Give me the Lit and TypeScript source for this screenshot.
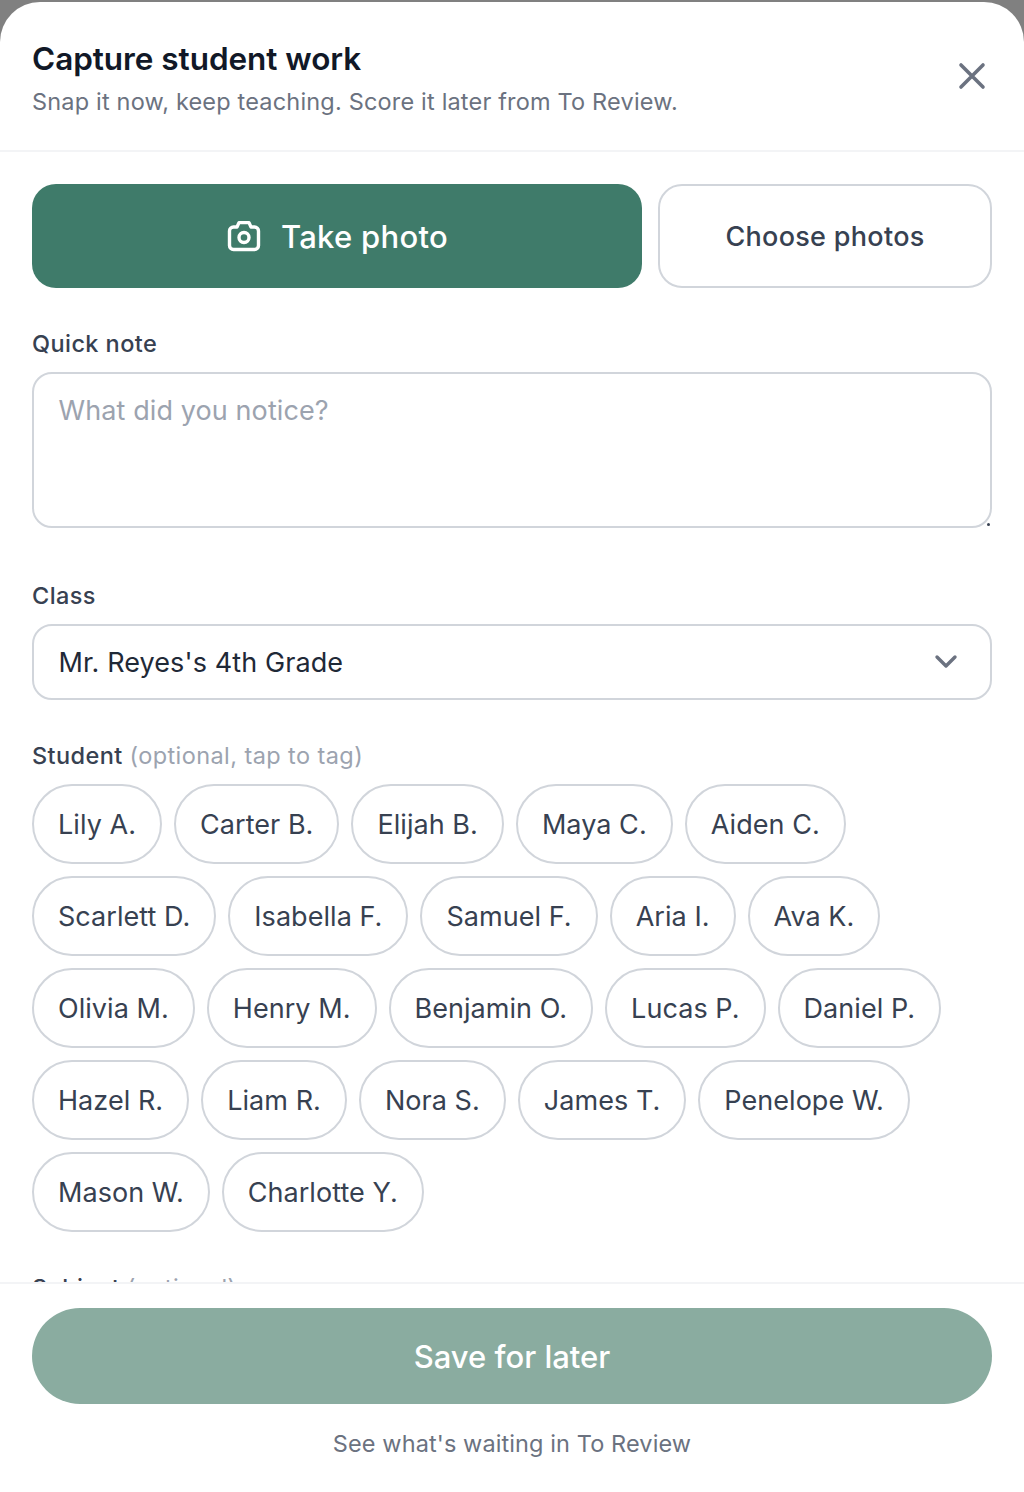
import { LitElement, html, css } from "lit";
import { customElement } from "lit/decorators.js";

const rows = ["Lily A.","Carter B.","Elijah B.","Maya C.","Aiden C.","Scarlett D.","Isabella F.","Samuel F.","Aria I.","Ava K.","Olivia M.","Henry M.","Benjamin O.","Lucas P.","Daniel P.","Hazel R.","Liam R.","Nora S.","James T.","Penelope W.","Mason W.","Charlotte Y."];

@customElement("app-root")
export class AppRoot extends LitElement {
  static styles = css`
    :host { display: block; height: 1492px; background: #808080; font-family: Inter, "Liberation Sans", sans-serif; overflow: hidden; }
    * { box-sizing: border-box; }
    .sheet { margin-top: 2px; height: 1490px; background: #fff; border-radius: 40px 40px 0 0; display: flex; flex-direction: column; overflow: hidden; }
    .header { height: 150px; flex: none; border-bottom: 2px solid #f3f4f6; padding: 36px 32px 0; display: flex; justify-content: space-between; }
    h1 { margin: 0; font-size: 31.5px; line-height: 42px; font-weight: 600; color: #111827; letter-spacing: -0.05px; }
    .sub { margin: 6px 0 0; font-size: 23.5px; line-height: 32px; color: #6b7280; letter-spacing: 0.18px; }
    .close { margin: 20px 2px 0 0; width: 36px; height: 36px; color: #6b7280; }
    .body { flex: 1; min-height: 0; overflow: hidden; padding: 32px 32px 0; }
    .actions { display: flex; gap: 16px; }
    .take { flex: none; width: 610px; height: 104px; border-radius: 24px; background: #3f7b6a; color: #fff; display: flex; align-items: center; justify-content: center; gap: 19px; font-size: 31px; font-weight: 500; letter-spacing: 0.3px; }
    .choose { flex: 1; height: 104px; border-radius: 24px; border: 2px solid #d1d5db; display: flex; align-items: center; justify-content: center; font-size: 27px; font-weight: 500; color: #374151; letter-spacing: 0.3px; padding-top: 1px; }
    .label { font-size: 23.5px; line-height: 32px; font-weight: 500; color: #374151; letter-spacing: 0.42px; }
    .label span { font-weight: 400; color: #9ca3af; }
    .field { margin-top: 12px; border: 2px solid #d1d5db; border-radius: 20px; padding: 0 32px 0 24.5px; font-size: 27px; letter-spacing: 0.1px; }
    .note { height: 156px; padding-top: 19px; line-height: 36px; color: #9ca3af; position: relative; }
    .grip { position: absolute; right: 0; bottom: 0; width: 3px; height: 3px; background: #374151; border-radius: 50%; }
    .select { height: 76px; display: flex; align-items: center; justify-content: space-between; color: #1f2937; }
    .chips { display: flex; flex-wrap: wrap; gap: 12px; margin-top: 12px; }
    .chip { height: 80px; padding: 0 24px; border: 2px solid #d1d5db; border-radius: 40px; display: flex; align-items: center; font-size: 27px; color: #374151; letter-spacing: 0.05px; }
    .footer { height: 210px; flex: none; border-top: 2px solid #f3f4f6; padding: 24px 32px 0; background: #fff; }
    .save { height: 96px; border-radius: 48px; background: #8aaca0; color: #fff; display: flex; align-items: center; justify-content: center; font-size: 31px; font-weight: 500; }
    .link { margin-top: 24px; text-align: center; font-size: 23.5px; line-height: 32px; color: #6b7280; letter-spacing: 0.1px; }
  `;
  render() {
    return html`<div class="sheet">
      <div class="header">
        <div><h1>Capture student work</h1><p class="sub">Snap it now, keep teaching. Score it later from To Review.</p></div>
        <svg class="close" viewBox="0 0 36 36" fill="none" stroke="currentColor" stroke-width="3.6" stroke-linecap="round"><path d="M7 7l22 22M29 7L7 29"/></svg>
      </div>
      <div class="body">
        <div class="actions">
          <div class="take"><svg width="36" height="36" viewBox="0 0 36 36" fill="none" stroke="currentColor" stroke-width="3.4" stroke-linejoin="round" stroke-linecap="round"><path d="M11 9l2-4.4h10L25 9h3.5a4 4 0 0 1 4 4v14.5a4 4 0 0 1-4 4h-21a4 4 0 0 1-4-4V13a4 4 0 0 1 4-4z"/><circle cx="18" cy="19.5" r="5"/></svg>Take photo</div>
          <div class="choose">Choose photos</div>
        </div>
        <div class="label" style="margin-top:40px">Quick note</div>
        <div class="field note">What did you notice?<i class="grip"></i></div>
        <div class="label" style="margin-top:52px">Class</div>
        <div class="field select">Mr. Reyes's 4th Grade<svg width="24" height="24" viewBox="0 0 24 24" fill="none" stroke="#6b7280" stroke-width="3.4" stroke-linecap="round" stroke-linejoin="round"><path d="M3 7l9 9 9-9"/></svg></div>
        <div class="label" style="margin-top:40px">Student <span>(optional, tap to tag)</span></div>
        <div class="chips">${rows.map((n) => html`<div class="chip">${n}</div>`)}</div>
        <div class="label" style="margin-top:40px">Subject <span>(optional)</span></div>
      </div>
      <div class="footer">
        <div class="save">Save for later</div>
        <div class="link">See what's waiting in To Review</div>
      </div>
    </div>`;
  }
}
